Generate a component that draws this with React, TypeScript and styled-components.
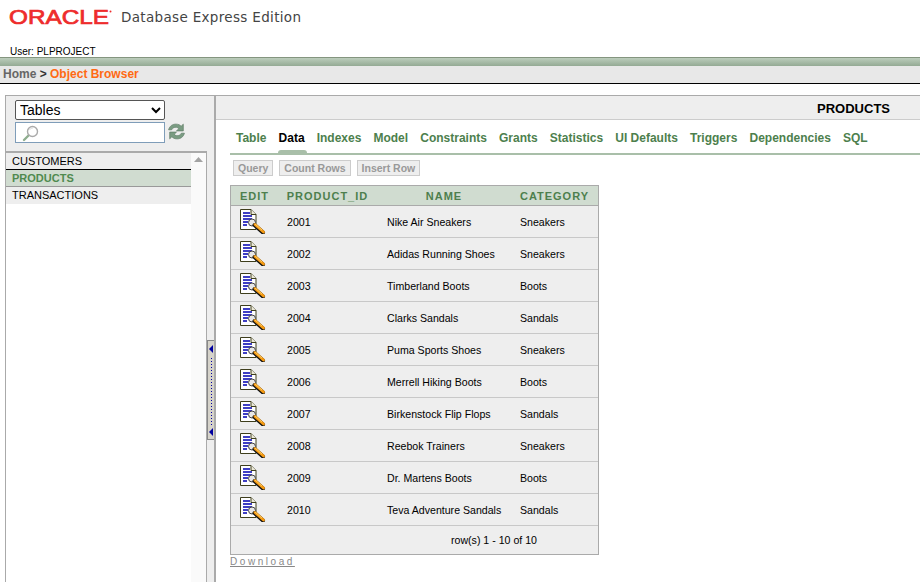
import React from "react";
import styled, { createGlobalStyle } from "styled-components";

const Global = createGlobalStyle`
  html, body { margin: 0; padding: 0; background: #fff; }
  body { font-family: "Liberation Sans", Arial, sans-serif; overflow: hidden; }
  * { box-sizing: border-box; }
`;

const Page = styled.div`
  width: 920px;
  height: 582px;
  display: flex;
  flex-direction: column;
  overflow: hidden;
`;
const Header = styled.header`
  height: 57px;
  padding: 8px 0 0 9px;
  display: flex;
  flex-direction: column;
`;
const Brand = styled.div`
  display: flex;
  align-items: center;
  gap: 9px;
  height: 18px;
`;
const ProductName = styled.span`
  font-family: "DejaVu Sans", sans-serif;
  font-size: 13.5px;
  color: #444;
  letter-spacing: 0.33px;
  position: relative;
  top: -0.5px;
`;
const UserLine = styled.div`
  margin-top: 20px;
  margin-left: 1px;
  font-size: 10px;
  line-height: 11px;
  color: #000;
`;
const GreenBar = styled.div`
  height: 9px;
  border-top: 1px solid #84957f;
  background: linear-gradient(#bccdbc, #94aa94);
`;
const Crumbs = styled.nav`
  height: 18px;
  background: #e8e8e8;
  border-bottom: 1px solid #000;
  padding-left: 3px;
  font-size: 12px;
  line-height: 17px;
  font-weight: bold;
  color: #333;
  white-space: pre;
`;
const CrumbHome = styled.span`
  color: #666;
`;
const CrumbCurrent = styled.span`
  color: #ff6a13;
`;
const Workspace = styled.div`
  flex: 1;
  margin-top: 11px;
  padding-left: 5px;
  display: flex;
  min-height: 0;
`;
const LeftPane = styled.aside`
  width: 209px;
  flex: none;
  border-top: 1px solid #aaa;
  border-left: 1px solid #aaa;
  display: flex;
  flex-direction: column;
  background: #eee;
`;
const Finder = styled.div`
  height: 55px;
  padding: 4px 0 0 9px;
  display: grid;
  grid-template-columns: 150px 24px;
  grid-template-rows: 21px 21px;
  row-gap: 1px;
  column-gap: 3px;
  align-items: start;
`;
const TypeSelect = styled.select`
  grid-column: 1;
  width: 150px;
  height: 20px;
  font-family: "Liberation Sans", Arial, sans-serif;
  font-size: 14px;
  line-height: 16px;
  background: #fff;
  border: 1px solid #555;
  border-radius: 2px;
  padding: 0;
  color: #000;
`;
const SearchBox = styled.div`
  grid-column: 1;
  grid-row: 2;
  width: 150px;
  height: 21px;
  background: #fff;
  border: 1px solid #7f9db9;
  padding: 2px 0 0 6px;
  display: flex;
`;
const SearchInput = styled.input`
  flex: 1;
  min-width: 0;
  border: 0;
  outline: 0;
  background: transparent;
`;
const RefreshWrap = styled.div`
  grid-column: 2;
  grid-row: 2;
  display: flex;
  padding-top: 1px;
`;
const ListArea = styled.div`
  flex: 1;
  display: flex;
  min-height: 0;
`;
const ListFrame = styled.div`
  width: 201px;
  flex: none;
  border-top: 2px solid #aaa;
  border-right: 1px solid #aaa;
  background: #fff;
  display: flex;
`;
const TableList = styled.ul`
  list-style: none;
  margin: 0;
  padding: 0;
  width: 185px;
`;
const ListRow = styled.li<{ $active?: boolean; $sep?: string }>`
  height: 17px;
  padding-left: 6px;
  font-size: 11px;
  line-height: 16px;
  font-weight: ${(p) => (p.$active ? "bold" : "normal")};
  color: ${(p) => (p.$active ? "#4f8a4f" : "#000")};
  background: ${(p) => (p.$active ? "#d0dcd0" : "#eee")};
  border-bottom: 1px solid ${(p) => p.$sep || "transparent"};
`;
const ScrollTrack = styled.div`
  flex: 1;
  background: #fafafa;
  padding: 4px 0 0 3px;
`;
const Gutter = styled.div`
  flex: 1;
  position: relative;
`;
const Splitter = styled.div`
  position: absolute;
  left: 0;
  top: 189px;
  width: 7px;
  height: 100px;
  background: #d6d3ca;
  border: 1px solid #888;
  border-width: 1px 0 1px 1px;
`;
const RightPane = styled.main`
  flex: 1;
  min-width: 0;
  border-left: 2px solid #aaa;
  display: flex;
  flex-direction: column;
`;
const TitleBar = styled.div`
  height: 25px;
  background: #eee;
  border-top: 1px solid #aaa;
  border-bottom: 1px solid #ccc;
  padding: 1px 30px 0 0;
  text-align: right;
  font-size: 13px;
  font-weight: bold;
  line-height: 24px;
  color: #000;
`;
const Content = styled.div`
  padding: 0 0 0 14px;
  display: flex;
  flex-direction: column;
  align-items: flex-start;
`;
const TabBar = styled.div`
  align-self: stretch;
  height: 35px;
  border-bottom: 2px solid #a9bfa9;
  padding: 11px 0 0 6px;
  display: flex;
  gap: 12.1px;
`;
const Tab = styled.span<{ $active?: boolean }>`
  position: relative;
  font-size: 12px;
  font-weight: bold;
  line-height: 15px;
  color: ${(p) => (p.$active ? "#000" : "#4d7f4d")};
  ${(p) =>
    p.$active &&
    `&::after {
      content: "";
      position: absolute;
      left: -1px;
      right: -2px;
      top: 19px;
      height: 4px;
      background: #a9bfa9;
      border-radius: 3px 3px 0 0;
    }`}
`;
const ButtonRow = styled.div`
  display: flex;
  gap: 6px;
  margin: 5px 0 9px 3px;
`;
const GhostButton = styled.button`
  height: 16px;
  padding: 0 4px;
  background: #eee;
  border: 1px solid #ccc;
  font-family: "Liberation Sans", Arial, sans-serif;
  font-size: 10.5px;
  font-weight: bold;
  color: #999;
  line-height: 13px;
`;
const DataTable = styled.table`
  width: 369px;
  table-layout: fixed;
  border-collapse: separate;
  border-spacing: 0;
  border: 1px solid #aaa;
  background: #eee;
`;
const Th = styled.th<{ $w: number }>`
  width: ${(p) => p.$w}px;
  height: 20px;
  padding: 0 0 0 1px;
  background: #d0dcd0;
  border-bottom: 1px solid #aaa;
  font-size: 11px;
  font-weight: bold;
  letter-spacing: 1px;
  color: #4d7f4d;
  text-align: center;
`;
const Td = styled.td`
  height: 32px;
  padding: 0 0 0 10px;
  border-bottom: 1px solid #c8c8c8;
  font-size: 10.6px;
  color: #000;
`;
const IconTd = styled.td`
  height: 32px;
  padding: 0 0 1px 8px;
  border-bottom: 1px solid #c8c8c8;
`;
const FooterTd = styled.td`
  height: 28px;
  padding: 0 0 0 220px;
  font-size: 10.6px;
  color: #000;
`;
const DownloadLink = styled.a`
  margin-top: 1px;
  font-size: 10px;
  line-height: 12px;
  letter-spacing: 2.55px;
  color: #888;
  text-decoration: underline;
`;

const LogoSvg = styled.svg`
  display: block;
  flex: none;
  overflow: visible;
`;

const OracleLogo = () => (
  <LogoSvg width="103" height="24" viewBox="0 0 103 24">
    <text
      x="0"
      y="19"
      textLength="100"
      lengthAdjust="spacingAndGlyphs"
      fontFamily="'Liberation Sans', Arial, sans-serif"
      fontSize="20"
      fill="#ee2c2c"
      stroke="#ee2c2c"
      strokeWidth="0.7"
    >
      ORACLE
    </text>
    <circle cx="101.5" cy="6.500" r="1" fill="#ee2c2c" />
  </LogoSvg>
);

const Magnifier = () => (
  <svg width="17" height="17" viewBox="0 0 17 17">
    <path d="M7 10 2 15" stroke="#8fae8f" strokeWidth="2.400" strokeLinecap="round" />
    <circle cx="10.500" cy="6.500" r="5" fill="#fff" stroke="#aaa" strokeWidth="1.400" />
    <path d="M7.500 5a3.400 3.400 0 0 1 3.500-2" stroke="#ddd" fill="none" />
  </svg>
);

const Refresh = () => (
  <svg width="17" height="17" viewBox="1 1.300 15 14.400">
    <path
      d="M1.500 7C2.500 3.500 5 2 8 2c2.200 0 3.600.8 4.600 1.800L14.500 2v6h-6l2-2C9.500 5 8.800 4.800 8 4.800 6 4.800 4.800 5.800 4.200 7Z"
      fill="#7a9c82"
      stroke="#5d7a64"
      strokeWidth="0.6"
    />
    <path
      d="M15.500 10C14.500 13.500 12 15 9 15c-2.200 0-3.600-.8-4.600-1.800L2.500 15V9h6l-2 2c1 1 1.700 1.200 2.500 1.200 2 0 3.200-1 3.800-2.200Z"
      fill="#7a9c82"
      stroke="#5d7a64"
      strokeWidth="0.6"
    />
  </svg>
);

const UpArrow = () => (
  <svg width="9" height="5" viewBox="0 0 9 5" style={{ display: "block" }}>
    <path d="M4.500 0 9 5H0Z" fill="#a3a3a3" />
  </svg>
);

const SplitterMarks = () => (
  <svg width="6" height="98" viewBox="0 0 6 98" style={{ display: "block" }}>
    <path d="M1 8 5 4v8Z" fill="#0000a0" />
    <path d="M1 91 5 87v8Z" fill="#0000a0" />
    {Array.from({ length: 23 }, (_, i) => (
      <rect key={i} x="3" y={17 + i * 3} width="1" height="1" fill="#0000a0" />
    ))}
  </svg>
);

const EditIcon = () => (
  <svg width="27" height="26" viewBox="0 0 27 26" style={{ display: "block" }}>
    <path d="M1.500 1.500H12l5 5v15H1.500Z" fill="#fff" stroke="#3e3e1c" />
    <path d="M12 1.500v5h5" fill="#ece9d8" stroke="#3e3e1c" />
    <path d="M4 5h7M4 8h9M4 11h9M4 14h5M4 17h4" stroke="#0000b0" strokeWidth="1.300" />
    <circle cx="13" cy="14.500" r="3.500" fill="#e8e8e8" stroke="#444" />
    <path d="M15.500 17l8.500 7.500" stroke="#111" strokeWidth="4" strokeLinecap="round" />
    <path d="M16 16.500l8.500 7.500" stroke="#f59a12" strokeWidth="2.800" strokeLinecap="round" />
    <path d="M16 16l7 6" stroke="#ffd878" strokeWidth="0.8" />
  </svg>
);

const rows: [string, string, string][] = [
  ["2001", "Nike Air Sneakers", "Sneakers"],
  ["2002", "Adidas Running Shoes", "Sneakers"],
  ["2003", "Timberland Boots", "Boots"],
  ["2004", "Clarks Sandals", "Sandals"],
  ["2005", "Puma Sports Shoes", "Sneakers"],
  ["2006", "Merrell Hiking Boots", "Boots"],
  ["2007", "Birkenstock Flip Flops", "Sandals"],
  ["2008", "Reebok Trainers", "Sneakers"],
  ["2009", "Dr. Martens Boots", "Boots"],
  ["2010", "Teva Adventure Sandals", "Sandals"],
];

const tabs = [
  "Table",
  "Data",
  "Indexes",
  "Model",
  "Constraints",
  "Grants",
  "Statistics",
  "UI Defaults",
  "Triggers",
  "Dependencies",
  "SQL",
];

export default function App() {
  return (
    <Page>
      <Global />
      <Header>
        <Brand>
          <OracleLogo />
          <ProductName>Database Express Edition</ProductName>
        </Brand>
        <UserLine>User: PLPROJECT</UserLine>
      </Header>
      <GreenBar />
      <Crumbs>
        <CrumbHome>Home</CrumbHome>
        {" > "}
        <CrumbCurrent>Object Browser</CrumbCurrent>
      </Crumbs>
      <Workspace>
        <LeftPane>
          <Finder>
            <TypeSelect defaultValue="Tables">
              <option>Tables</option>
            </TypeSelect>
            <SearchBox>
              <Magnifier />
              <SearchInput />
            </SearchBox>
            <RefreshWrap>
              <Refresh />
            </RefreshWrap>
          </Finder>
          <ListArea>
            <ListFrame>
              <TableList>
                <ListRow $sep="#000">CUSTOMERS</ListRow>
                <ListRow $active $sep="#999">PRODUCTS</ListRow>
                <ListRow>TRANSACTIONS</ListRow>
              </TableList>
              <ScrollTrack>
                <UpArrow />
              </ScrollTrack>
            </ListFrame>
            <Gutter>
              <Splitter>
                <SplitterMarks />
              </Splitter>
            </Gutter>
          </ListArea>
        </LeftPane>
        <RightPane>
          <TitleBar>PRODUCTS</TitleBar>
          <Content>
            <TabBar>
              {tabs.map((t) => (
                <Tab key={t} $active={t === "Data"}>
                  {t}
                </Tab>
              ))}
            </TabBar>
            <ButtonRow>
              <GhostButton>Query</GhostButton>
              <GhostButton>Count Rows</GhostButton>
              <GhostButton>Insert Row</GhostButton>
            </ButtonRow>
            <DataTable>
              <thead>
                <tr>
                  <Th $w={46}>EDIT</Th>
                  <Th $w={100}>PRODUCT_ID</Th>
                  <Th $w={133}>NAME</Th>
                  <Th $w={88}>CATEGORY</Th>
                </tr>
              </thead>
              <tbody>
                {rows.map(([id, name, cat]) => (
                  <tr key={id}>
                    <IconTd>
                      <EditIcon />
                    </IconTd>
                    <Td>{id}</Td>
                    <Td>{name}</Td>
                    <Td>{cat}</Td>
                  </tr>
                ))}
                <tr>
                  <FooterTd colSpan={4}>row(s) 1 - 10 of 10</FooterTd>
                </tr>
              </tbody>
            </DataTable>
            <DownloadLink href="#">Download</DownloadLink>
          </Content>
        </RightPane>
      </Workspace>
    </Page>
  );
}
